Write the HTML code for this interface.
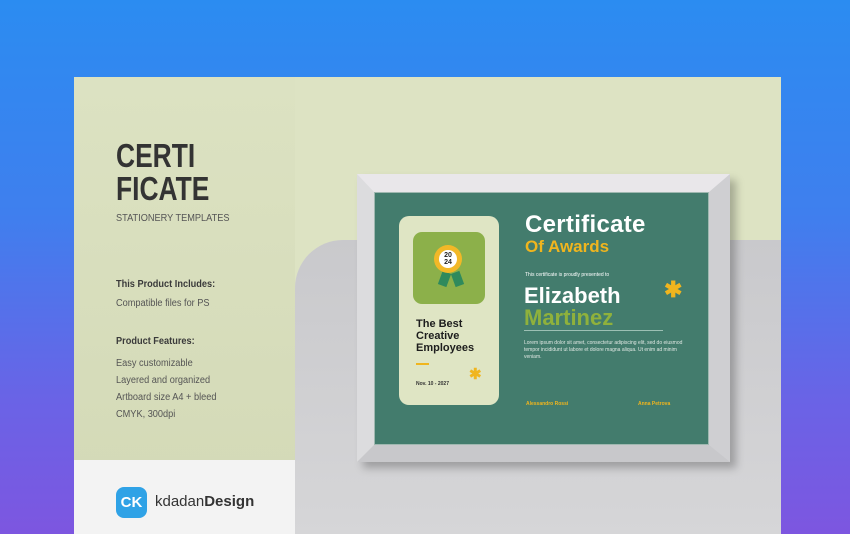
<!DOCTYPE html>
<html><head><style>
*{margin:0;padding:0;box-sizing:border-box}
body{width:850px;height:534px;overflow:hidden;background:linear-gradient(180deg,#2b8cf1 0%,#3f7fee 40%,#6a63e6 75%,#7d56e0 100%);font-family:"Liberation Sans",sans-serif;position:relative}
.card{position:absolute;left:74px;top:77px;width:707px;height:457px;background:#dde3c3;overflow:hidden}
.left{position:absolute;left:0;top:0;width:221px;height:457px;background:linear-gradient(180deg,#dce2c2,#d3d9b6)}
.white{position:absolute;left:0;top:383px;width:221px;height:74px;background:#f3f3f3}
.gray{position:absolute;left:221px;top:163px;width:486px;height:300px;background:linear-gradient(180deg,#c9c9cc,#d6d6d8);border-top-left-radius:48px}
.t{position:absolute;color:#3a3a3a}
.n{transform:scaleX(.92);transform-origin:left}
h1{position:absolute;left:42px;top:62px;font-size:33px;line-height:33px;color:#333;font-weight:bold;transform:scaleX(.8);transform-origin:left}
.frame{position:absolute;left:357px;top:174px;width:373px;height:288px;border-style:solid;border-width:18px 21px 17px 17px;border-color:#e9e7ea #cfcfd2 #c8c8cb #dcdcde;box-shadow:6px 6px 8px rgba(0,0,0,.25)}
.inner{position:absolute;left:374px;top:192px;width:335px;height:253px;background:#437c6d;border:1px solid #9fb8b0}
.yel{color:#f0b51e}
</style></head><body>
<div class="card">
<div class="left"></div>
<div class="gray"></div>
<div class="white"></div>
<h1>CERTI<br>FICATE</h1>
<div class="t n" style="left:42px;top:136px;font-size:10px;color:#555">STATIONERY TEMPLATES</div>
<div class="t n" style="left:42px;top:202px;font-size:10px;font-weight:bold">This Product Includes:</div>
<div class="t n" style="left:42px;top:221px;font-size:10px;color:#555">Compatible files for PS</div>
<div class="t n" style="left:42px;top:259px;font-size:10px;font-weight:bold">Product Features:</div>
<div class="t n" style="left:42px;top:278px;font-size:10px;color:#555;line-height:17px">Easy customizable<br>Layered and organized<br>Artboard size A4 + bleed<br>CMYK, 300dpi</div>
<div style="position:absolute;left:42px;top:410px;width:31px;height:31px;border-radius:8px;background:#2fa2e6;color:#fff;font-weight:bold;font-size:15px;text-align:center;line-height:31px">CK</div>
<div class="t" style="left:81px;top:416px;font-size:15px;color:#333">kdadan<b>Design</b></div>
</div>
<div class="frame"></div>
<div class="inner"></div>
<div style="position:absolute;left:399px;top:216px;width:100px;height:189px;background:#dfe5c4;border-radius:10px"></div>
<div style="position:absolute;left:413px;top:232px;width:72px;height:72px;background:#8cb04a;border-radius:9px"></div>
<div style="position:absolute;left:440px;top:272px;width:9px;height:14px;background:#2f8a5c;transform:rotate(20deg)"></div>
<div style="position:absolute;left:453px;top:272px;width:9px;height:14px;background:#2f8a5c;transform:rotate(-20deg)"></div>
<div style="position:absolute;left:434px;top:245px;width:28px;height:28px;border-radius:50%;background:#f2b827"></div>
<div style="position:absolute;left:439px;top:250px;width:18px;height:18px;border-radius:50%;background:#fff;font-size:7px;font-weight:bold;text-align:center;line-height:7px;padding-top:2px;color:#222">20<br>24</div>
<div style="position:absolute;left:416px;top:318px;font-size:11px;font-weight:bold;color:#1d1d1d;line-height:12px">The Best<br>Creative<br>Employees</div>
<div style="position:absolute;left:416px;top:363px;width:13px;height:2px;background:#f0b51e"></div>
<div style="position:absolute;left:416px;top:381px;font-size:5px;font-weight:bold;color:#333">Nov. 10 - 2027</div>
<div class="yel" style="position:absolute;left:469px;top:365px;font-size:15px;font-weight:bold">✱</div>
<div style="position:absolute;left:525px;top:211px;font-size:24px;font-weight:bold;color:#fff;letter-spacing:.3px">Certificate</div>
<div class="yel" style="position:absolute;left:525px;top:237px;font-size:17px;font-weight:bold">Of Awards</div>
<div style="position:absolute;left:525px;top:272px;font-size:5px;color:#fff">This certificate is proudly presented to</div>
<div style="position:absolute;left:524px;top:283px;font-size:22px;font-weight:bold;color:#fff">Elizabeth</div>
<div style="position:absolute;left:524px;top:305px;font-size:22px;font-weight:bold;color:#8fb13c">Martinez</div>
<div style="position:absolute;left:524px;top:330px;width:139px;height:1px;background:#9cc0b4"></div>
<div style="position:absolute;left:524px;top:340px;width:162px;font-size:5px;color:#dfe8e3;line-height:7px">Lorem ipsum dolor sit amet, consectetur adipiscing elit, sed do eiusmod tempor incididunt ut labore et dolore magna aliqua. Ut enim ad minim veniam.</div>
<div class="yel" style="position:absolute;left:664px;top:277px;font-size:22px;font-weight:bold">✱</div>
<div class="yel" style="position:absolute;left:526px;top:401px;font-size:5px;font-weight:bold">Alessandro Rossi</div>
<div class="yel" style="position:absolute;left:638px;top:401px;font-size:5px;font-weight:bold">Anna Petrova</div>
</body></html>
